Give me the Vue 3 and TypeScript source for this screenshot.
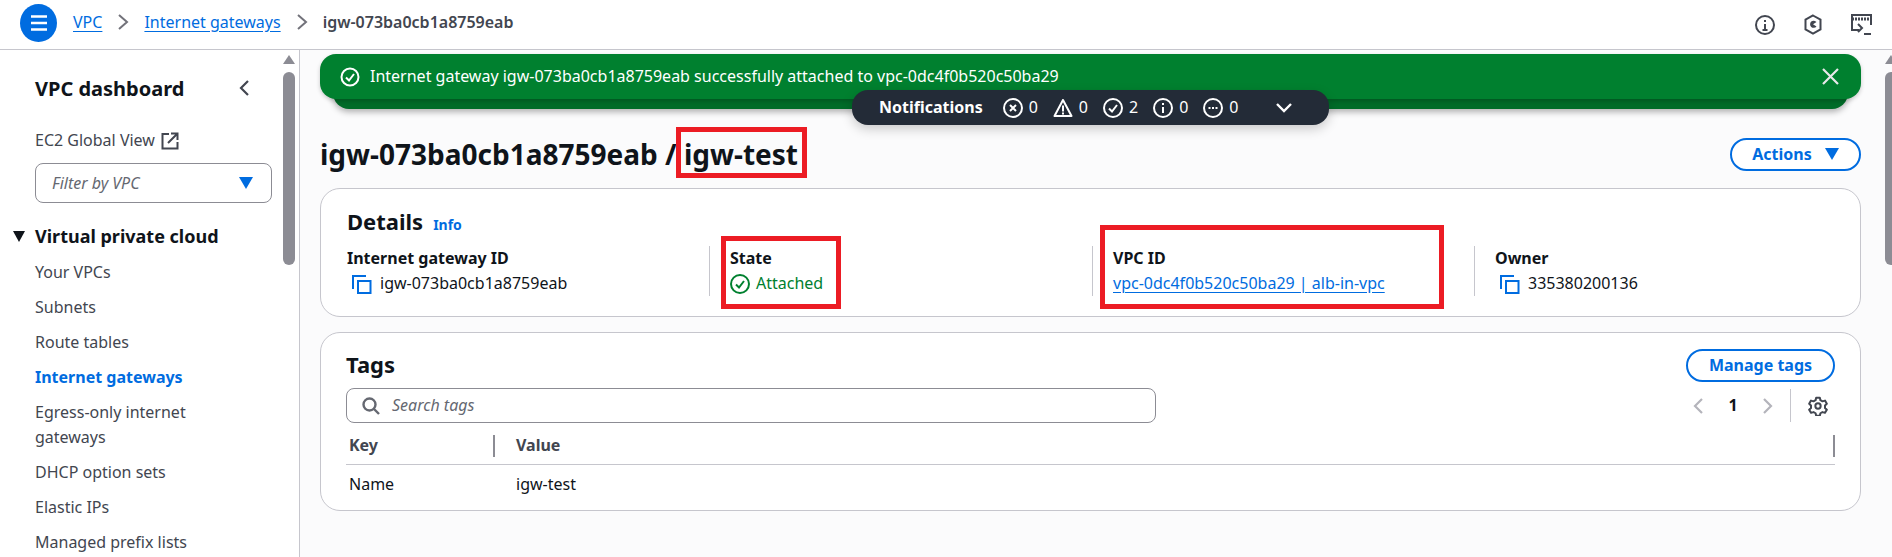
<script setup lang="ts">
const navItems = [
  { label: 'Your VPCs' },
  { label: 'Subnets' },
  { label: 'Route tables' },
  { label: 'Internet gateways', active: true },
  { label: 'Egress-only internet gateways' },
  { label: 'DHCP option sets' },
  { label: 'Elastic IPs' },
  { label: 'Managed prefix lists' }
]

const counters = [
  { kind: 'error', count: 0 },
  { kind: 'warning', count: 0 },
  { kind: 'success', count: 2 },
  { kind: 'info', count: 0 },
  { kind: 'pending', count: 0 }
]
</script>

<template>
  <div class="page">
    <header class="topbar">
      <button class="menu-btn" aria-label="Menu">
        <svg width="20" height="20" viewBox="0 0 20 20"><path d="M2 3.5h16M2 10h16M2 16.5h16" stroke="#fff" stroke-width="2.4" fill="none" /></svg>
      </button>
      <nav class="crumbs">
        <a class="crumb-link">VPC</a>
        <svg class="crumb-sep" width="12" height="18" viewBox="0 0 12 18"><path d="M2 2l8 7-8 7" fill="none" stroke="#72727a" stroke-width="2" /></svg>
        <a class="crumb-link">Internet gateways</a>
        <svg class="crumb-sep" width="12" height="18" viewBox="0 0 12 18"><path d="M2 2l8 7-8 7" fill="none" stroke="#72727a" stroke-width="2" /></svg>
        <span class="crumb-current">igw-073ba0cb1a8759eab</span>
      </nav>
      <div class="top-icons">
        <svg width="20" height="20" viewBox="0 0 20 20" fill="none" stroke="#424650" stroke-width="2"><circle cx="10" cy="10" r="9" /><path d="M10 9v6M7.5 15h5M10 5v2" /></svg>
        <svg width="18" height="21" viewBox="0 0 18 21" fill="none" stroke="#424650" stroke-width="2"><path d="M9 1.5l7.5 4.2v9.6L9 19.5l-7.5-4.200V5.700z" /><path d="M12.500 12.500A3.600 3.600 0 1 1 12.500 8L9 10.300z" fill="#424650" stroke="none" /></svg>
        <svg width="21" height="22" viewBox="0 0 21 22" fill="none" stroke="#424650" stroke-width="2"><path d="M8 16H1V1h19v10" /><path d="M1 5h19" stroke-width="3" stroke-dasharray="2 1" /><path d="M7 10l4 4-4 4M13 20h7" /></svg>
      </div>
    </header>

    <div class="body">
      <aside class="sidebar">
        <div class="side-inner">
          <div class="side-head">
            <h2>VPC dashboard</h2>
            <svg width="12" height="16" viewBox="0 0 12 16"><path d="M10 1L3 8l7 7" fill="none" stroke="#424650" stroke-width="2.200" /></svg>
          </div>
          <div class="global-view">
            EC2 Global View
            <svg width="18" height="18" viewBox="0 0 18 18" fill="none" stroke="#424650" stroke-width="2"><path d="M8 2H1.500v14.500h15V10" /><path d="M7 11l9-9M10 1.500h6.500V8" /></svg>
          </div>
          <div class="vpc-filter">
            <span>Filter by VPC</span>
            <svg width="14" height="12" viewBox="0 0 14 12"><path d="M0 0h14L7 12z" fill="#006ce0" /></svg>
          </div>
          <div class="side-section">
            <svg width="12" height="11" viewBox="0 0 12 11"><path d="M0 0h12L6 11z" fill="#0f141a" /></svg>
            Virtual private cloud
          </div>
          <ul class="side-nav">
            <li v-for="item in navItems" :key="item.label" :class="{ active: item.active }">{{ item.label }}</li>
          </ul>
        </div>
        <div class="scrollbar side-scroll"><i class="scroll-arrow"></i><i class="scroll-thumb"></i></div>
      </aside>

      <main class="main">
        <div class="content">
          <div class="flash-stack">
            <div class="flash-under"></div>
            <div class="flash">
              <svg width="20" height="20" viewBox="0 0 20 20" fill="none" stroke="#fff" stroke-width="2"><circle cx="10" cy="10" r="8.500" /><path d="M6 10.500l3 3 5-6.500" /></svg>
              <span class="flash-text">Internet gateway igw-073ba0cb1a8759eab successfully attached to vpc-0dc4f0b520c50ba29</span>
              <svg class="flash-close" width="17" height="17" viewBox="0 0 17 17"><path d="M1 1l15 15M16 1L1 16" stroke="#e8e8ea" stroke-width="2.200" /></svg>
            </div>
            <div class="notif-pill">
              <strong>Notifications</strong>
              <span v-for="c in counters" :key="c.kind" class="notif-count">
                <svg width="20" height="20" viewBox="0 0 20 20" fill="none" stroke="#fff" stroke-width="2">
                  <template v-if="c.kind === 'warning'">
                    <path d="M10 2L1.500 18h17z" stroke-linejoin="round" /><path d="M10 7.500v6M10 14.500v2" />
                  </template>
                  <template v-else>
                    <circle cx="10" cy="10" r="9" />
                    <path v-if="c.kind === 'error'" d="M7 7l6 6M13 7l-6 6" />
                    <path v-if="c.kind === 'success'" d="M6 10.500l3 3 5-6.500" />
                    <path v-if="c.kind === 'info'" d="M10 9v6M10 5v2" />
                    <path v-if="c.kind === 'pending'" d="M5.500 10h2M9 10h2M12.500 10h2" />
                  </template>
                </svg>
                {{ c.count }}
              </span>
              <svg class="notif-caret" width="18" height="11" viewBox="0 0 18 11"><path d="M2 2l7 7 7-7" fill="none" stroke="#fff" stroke-width="2.400" /></svg>
            </div>
          </div>

          <div class="title-row">
            <h1>igw-073ba0cb1a8759eab / <span class="marked title-mark">igw-test</span></h1>
            <button class="pill-btn actions">
              Actions
              <svg width="14" height="12" viewBox="0 0 14 12"><path d="M0 0h14L7 12z" fill="#006ce0" /></svg>
            </button>
          </div>

          <section class="card details">
            <div class="details-head"><h2>Details</h2><a class="info-link">Info</a></div>
            <div class="details-grid">
              <div class="field">
                <div class="field-label">Internet gateway ID</div>
                <div class="field-value">
                  <svg class="copy" width="20" height="20" viewBox="0 0 20 20" fill="none" stroke="#006ce0" stroke-width="2"><path d="M14 2H1v13" /><rect x="6" y="7" width="12.500" height="12" /></svg>
                  igw-073ba0cb1a8759eab
                </div>
              </div>
              <div class="field marked state-mark">
                <div class="field-label">State</div>
                <div class="field-value ok">
                  <svg width="20" height="20" viewBox="0 0 20 20" fill="none" stroke="#00802f" stroke-width="2"><circle cx="10" cy="10" r="9" /><path d="M6 10.500l3 3 5-6.500" /></svg>
                  Attached
                </div>
              </div>
              <div class="field marked vpc-mark">
                <div class="field-label">VPC ID</div>
                <div class="field-value"><a class="vpc-link">vpc-0dc4f0b520c50ba29 | alb-in-vpc</a></div>
              </div>
              <div class="field">
                <div class="field-label">Owner</div>
                <div class="field-value">
                  <svg class="copy" width="20" height="20" viewBox="0 0 20 20" fill="none" stroke="#006ce0" stroke-width="2"><path d="M14 2H1v13" /><rect x="6" y="7" width="12.500" height="12" /></svg>
                  335380200136
                </div>
              </div>
            </div>
          </section>

          <section class="card tags">
            <div class="tags-top">
              <div class="tags-left">
                <h2>Tags</h2>
                <div class="search">
                  <svg width="18" height="18" viewBox="0 0 18 18" fill="none" stroke="#656871" stroke-width="2.400"><circle cx="7.500" cy="7.500" r="6" /><path d="M12 12l5 5" /></svg>
                  <span>Search tags</span>
                </div>
              </div>
              <div class="tags-right">
                <button class="pill-btn manage">Manage tags</button>
                <div class="pager">
                  <svg width="10" height="16" viewBox="0 0 10 16"><path d="M9 1L2 8l7 7" fill="none" stroke="#b4b4bb" stroke-width="2.200" /></svg>
                  <b>1</b>
                  <svg width="10" height="16" viewBox="0 0 10 16"><path d="M1 1l7 7-7 7" fill="none" stroke="#b4b4bb" stroke-width="2.200" /></svg>
                  <i class="pager-sep"></i>
                  <svg width="20" height="20" viewBox="0 0 24 24" fill="none" stroke="#424650" stroke-width="2.400" stroke-linejoin="round"><circle cx="12" cy="12" r="3.200" /><path d="M9.800 2h4.400l.7 3 2.500 1.400 3-.9 2.200 3.800-2.200 2.100v2.900l2.200 2.100-2.200 3.800-3-.9-2.500 1.400-.7 3H9.800l-.7-3-2.500-1.400-3 .9-2.200-3.800 2.200-2.100v-2.900L1.400 9.300l2.200-3.800 3 .9 2.500-1.400z" /></svg>
                </div>
              </div>
            </div>
            <table class="tag-table">
              <thead>
                <tr><th class="col-key">Key</th><th>Value</th></tr>
              </thead>
              <tbody>
                <tr><td>Name</td><td>igw-test</td></tr>
              </tbody>
            </table>
          </section>
        </div>
        <div class="scrollbar main-scroll"><i class="scroll-arrow"></i><i class="scroll-thumb"></i></div>
      </main>
    </div>
  </div>
</template>

<style scoped>
.page {
  height: 557px;
  display: flex;
  flex-direction: column;
  overflow: hidden;
  font-family: 'Noto Sans', sans-serif;
  font-size: 16px;
  line-height: 25px;
  color: #0f141a;
  background: #fff;
}
h1, h2 { margin: 0; }

.topbar {
  height: 49px;
  flex: none;
  display: flex;
  align-items: center;
  padding: 0 20px;
  border-bottom: 1px solid #c6c6cd;
  box-sizing: content-box;
}
.menu-btn {
  width: 37px;
  height: 38px;
  border: 0;
  padding: 0;
  border-radius: 50%;
  background: #006ce0;
  display: flex;
  align-items: center;
  justify-content: center;
  margin-top: -3px;
}
.crumbs {
  display: flex;
  align-items: center;
  margin-left: 16px;
  margin-top: -5px;
}
.crumb-link { color: #006ce0; text-decoration: underline; text-underline-offset: 3px; }
.crumb-sep { margin: 0 15px; }
.crumb-current { color: #424650; font-weight: 600; }
.top-icons {
  margin-left: auto;
  display: flex;
  align-items: center;
  gap: 29px;
  margin-right: 0;
}

.body { flex: 1; display: flex; min-height: 0; }

.sidebar {
  width: 300px;
  flex: none;
  box-sizing: border-box;
  border-right: 1px solid #c6c6cd;
  display: flex;
  background: #fff;
  overflow: hidden;
}
.side-inner { flex: 1; padding: 24px 0 0 35px; min-width: 0; }
.side-head {
  display: flex;
  align-items: center;
  justify-content: space-between;
  padding-right: 33px;
  height: 28px;
}
.side-head h2 { font-size: 20px; font-weight: 700; }
.global-view {
  margin-top: 26px;
  display: flex;
  align-items: center;
  gap: 6px;
  color: #424650;
}
.vpc-filter {
  margin-top: 10px;
  width: 237px;
  height: 40px;
  box-sizing: border-box;
  border: 1px solid #8c8c94;
  border-radius: 8px;
  display: flex;
  align-items: center;
  justify-content: space-between;
  padding: 0 18px 0 16px;
  font-style: italic;
  color: #656871;
}
.side-section {
  margin: 20px 0 0 -22px;
  display: flex;
  align-items: center;
  gap: 10px;
  font-size: 18px;
  font-weight: 700;
  height: 26px;
}
.side-nav { list-style: none; margin: 11px 0 0; padding: 0; width: 200px; }
.side-nav li { margin-bottom: 10px; color: #424650; }
.side-nav li.active { color: #006ce0; font-weight: 700; }

.scrollbar { flex: none; display: flex; flex-direction: column; align-items: center; }
.side-scroll { width: 12px; margin-right: 4px; padding-top: 5px; }
.scroll-arrow {
  width: 0;
  height: 0;
  border-left: 6px solid transparent;
  border-right: 6px solid transparent;
  border-bottom: 9px solid #8c8c94;
}
.scroll-thumb {
  width: 12px;
  height: 193px;
  margin-top: 8px;
  border-radius: 6px;
  background: #8c8c94;
}

.main { flex: 1; display: flex; background: #fbfbfc; min-width: 0; }
.content { width: 1541px; margin-left: 20px; flex: none; padding-top: 4px; }
.main-scroll { margin-left: auto; width: 7px; padding-top: 5px; overflow: hidden; align-items: flex-start; }

.flash-stack { position: relative; height: 55px; }
.flash {
  position: relative;
  height: 45px;
  box-sizing: border-box;
  border-radius: 16px;
  background: #00802f;
  color: #fff;
  display: flex;
  align-items: center;
  padding: 0 22px 0 20px;
  gap: 10px;
  box-shadow: 0 2px 4px rgba(0, 0, 0, .2);
}
.flash-close { margin-left: auto; }
.flash-under {
  position: absolute;
  left: 13px;
  right: 13px;
  top: 20px;
  height: 35px;
  border-radius: 16px;
  background: #006b28;
  box-shadow: 0 3px 6px rgba(0, 0, 0, .3);
}
.notif-pill {
  position: absolute;
  left: 532px;
  top: 36px;
  width: 477px;
  height: 35px;
  box-sizing: border-box;
  border-radius: 16px;
  background: #232b37;
  color: #fff;
  display: flex;
  align-items: center;
  padding: 0 36px 0 27px;
  box-shadow: 0 4px 12px rgba(0, 0, 0, .2);
}
.notif-pill strong { margin-right: 20px; font-weight: 700; }
.notif-count { display: flex; align-items: center; gap: 6px; margin-right: 15px; }
.notif-caret { margin-left: auto; }

.title-row {
  margin-top: 20px;
  display: flex;
  align-items: center;
  justify-content: space-between;
  height: 50px;
}
.title-row h1 { font-size: 28px; line-height: 36px; font-weight: 700; white-space: pre-wrap; }
.marked { position: relative; }
.marked::after {
  content: '';
  position: absolute;
  border: 5px solid #ec1c24;
  box-sizing: border-box;
  pointer-events: none;
}
.title-mark::after { left: -8px; right: -9px; top: -8px; bottom: -5px; }
.state-mark::after { left: 11px; width: 120px; top: -10px; height: 73px; }
.vpc-mark::after { left: 7px; width: 344px; top: -21px; height: 84px; }

.pill-btn {
  box-sizing: border-box;
  border: 2px solid #006ce0;
  border-radius: 20px;
  background: #fff;
  color: #006ce0;
  font: 700 16px/25px 'Noto Sans', sans-serif;
  display: flex;
  align-items: center;
  justify-content: center;
  padding: 0;
}
.actions { width: 131px; height: 33px; gap: 13px; }
.manage { width: 149px; height: 33px; }

.card {
  background: #fff;
  border: 1px solid #c6c6cd;
  border-radius: 20px;
  box-sizing: border-box;
}
.details { margin-top: 9px; height: 129px; padding: 17px 0 0 26px; }
.details-head { display: flex; align-items: baseline; gap: 10px; height: 30px; }
.details-head h2, .tags h2 { font-size: 22px; line-height: 30px; font-weight: 700; }
.info-link { color: #006ce0; font-size: 14px; font-weight: 700; }
.details-grid {
  margin-top: 10px;
  display: grid;
  grid-template-columns: 362px 383px 382px 1fr;
}
.field { height: 50px; padding-left: 20px; border-left: 1px solid #c6c6cd; }
.field:first-child { padding-left: 0; border-left: 0; }
.field-label { font-weight: 700; }
.field-value { display: flex; align-items: center; gap: 8px; }
.copy { margin-left: 5px; }
.ok { color: #00802f; gap: 6px; }
.vpc-link { color: #006ce0; text-decoration: underline; text-underline-offset: 3px; }

.tags { margin-top: 15px; height: 179px; padding: 16px 25px 0 25px; }
.tags-top { display: flex; justify-content: space-between; }
.tags-left { width: 810px; }
.search {
  margin-top: 9px;
  height: 35px;
  box-sizing: border-box;
  border: 1px solid #8c8c94;
  border-radius: 8px;
  display: flex;
  align-items: center;
  gap: 12px;
  padding-left: 15px;
  font-style: italic;
  color: #656871;
}
.tags-right { display: flex; flex-direction: column; align-items: flex-end; }
.pager { display: flex; align-items: center; margin-top: 7px; height: 33px; padding-right: 7px; }
.pager b { width: 60px; text-align: center; font-weight: 700; }
.pager-sep { width: 1px; height: 33px; background: #c6c6cd; margin: 0 17px; }

.tag-table { width: 100%; margin-top: 10px; border-collapse: collapse; }
.tag-table th {
  position: relative;
  text-align: left;
  padding: 0 0 6px 3px;
  height: 28px;
  color: #424650;
  font-weight: 700;
  border-bottom: 1px solid #c6c6cd;
  box-sizing: border-box;
}
.tag-table th:last-child { padding-left: 21px; }
.tag-table th::after {
  content: '';
  position: absolute;
  right: 0;
  top: 2px;
  width: 2px;
  height: 22px;
  background: #8c8c94;
}
.col-key { width: 149px; }
.tag-table td { padding: 7px 0 0 3px; }
.tag-table td:last-child { padding-left: 21px; }
</style>

<style>
html, body { margin: 0; overflow: hidden; }
</style>
